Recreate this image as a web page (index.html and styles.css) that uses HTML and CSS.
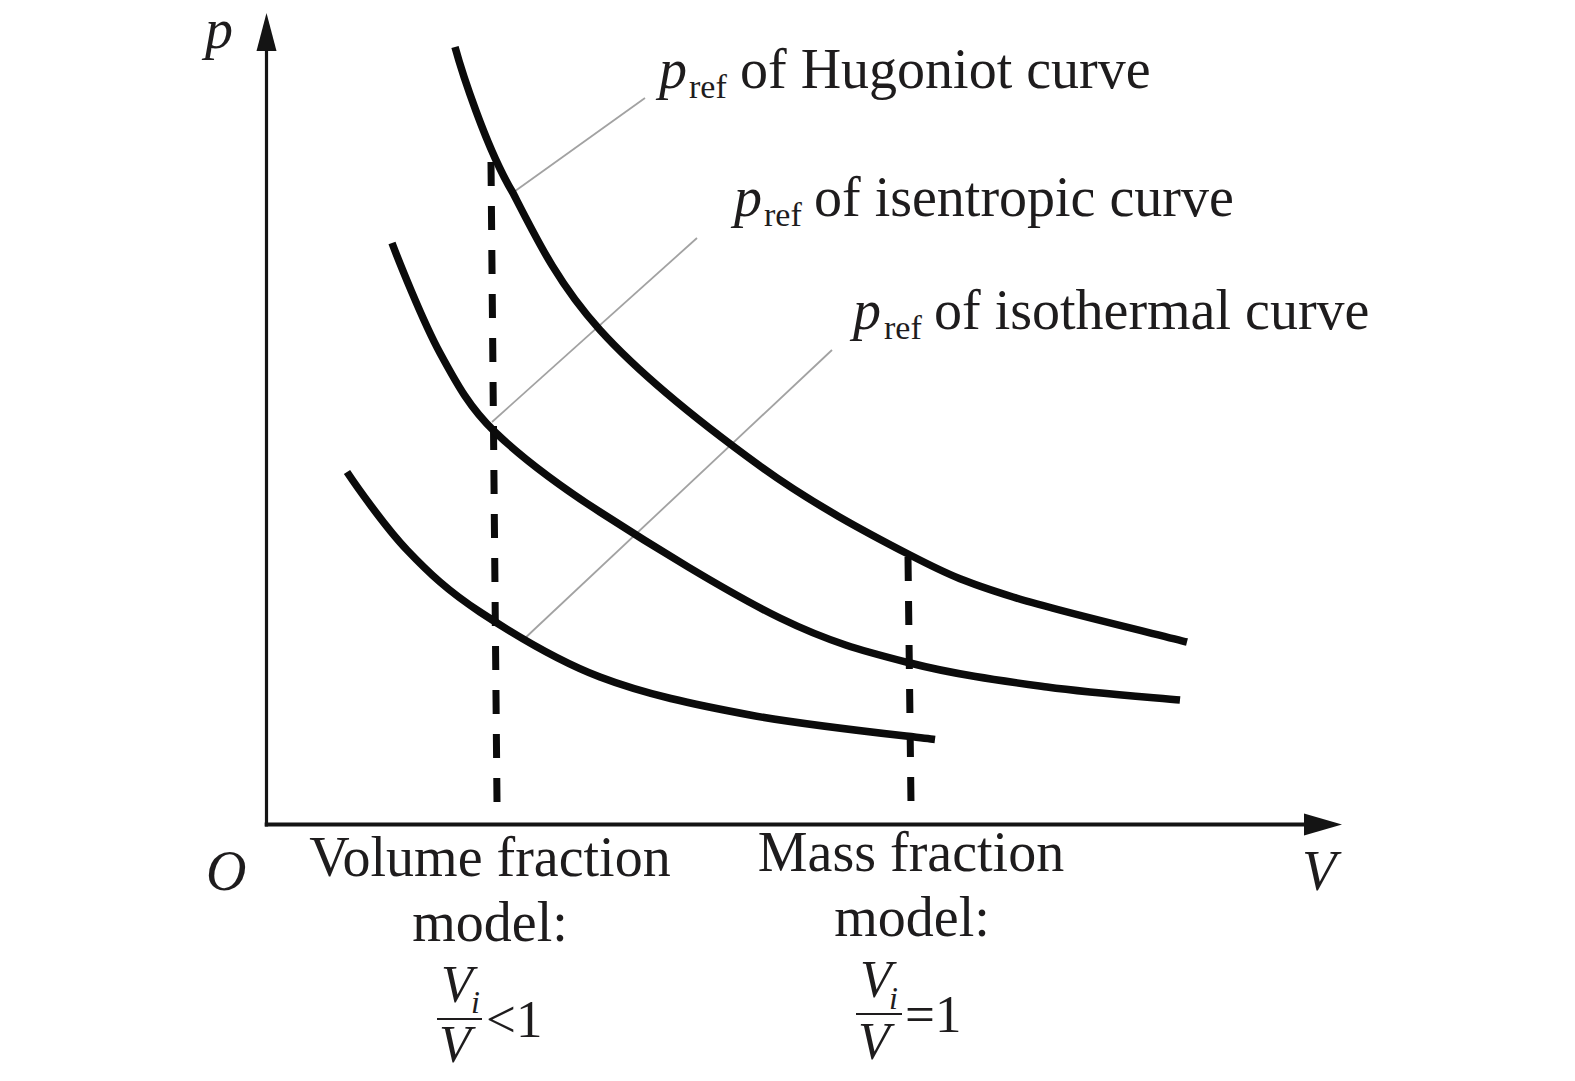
FILE: index.html
```html
<!DOCTYPE html>
<html lang="en">
<head>
<meta charset="utf-8">
<title>Reference pressure curves</title>
<link rel="stylesheet" href="styles.css">
</head>
<body>
<div class="figure">
<svg class="chart" width="1575" height="1081" viewBox="0 0 1575 1081" xmlns="http://www.w3.org/2000/svg">
  <!-- axes -->
  <line class="axis" x1="266.5" y1="826.5" x2="266.5" y2="46"/>
  <polygon class="arrow" points="256.5,51 266.5,13 276.5,51"/>
  <line class="axis axis-x" x1="264.7" y1="824.5" x2="1308" y2="824.5"/>
  <polygon class="arrow" points="1304,813.5 1342,824.5 1304,835.5"/>

  <!-- leader lines -->
  <line class="leader" x1="511" y1="194" x2="645" y2="98"/>
  <line class="leader" x1="492" y1="422" x2="697" y2="238"/>
  <line class="leader" x1="523" y1="640" x2="832" y2="350"/>

  <!-- dashed markers -->
  <line class="curve dash" x1="491" y1="162" x2="497" y2="802"/>
  <line class="curve dash" x1="908" y1="557" x2="911" y2="803"/>

  <!-- curves -->
  <path class="curve" d="M455,47 C461,69 486,148 513,193 C537.2,240.2 558.8,284.5 600,330 C641.2,375.5 708.3,428.5 760,466 C811.7,503.5 867.8,533.2 910,555 C952.2,576.8 966.8,582.5 1013,597 C1059.2,611.5 1158,634.5 1187,642"/>
  <path class="curve" d="M392,243 C398,259 422.8,321.3 440,353 C457.2,384.7 470,408 495,432 C521.7,457.5 552.5,481.2 600,512 C647.5,542.8 728.3,592.8 780,618 C831.7,643.2 865.5,651.5 910,663 C954.5,674.5 1002,680.8 1047,687 C1092,693.2 1157.8,697.8 1180,700"/>
  <path class="curve" d="M347,472 C355,484 384.8,526.7 407,550 C429.2,573.3 447.8,590.8 480,612 C512.2,633.2 555,659.8 600,677 C645,694.2 693.8,704.5 750,715 C806.2,725.5 905.8,735.8 935,739.5"/>

  <!-- axis labels -->
  <text class="txt it" x="205" y="48">p</text>
  <text class="txt it" x="206" y="890">O</text>
  <text class="txt it" x="1302" y="890">V</text>

  <!-- curve labels -->
  <text class="txt it" x="659" y="88">p</text>
  <text class="txt sub" x="689" y="98">ref</text>
  <text class="txt" x="740" y="88">of Hugoniot curve</text>

  <text class="txt it" x="734" y="216">p</text>
  <text class="txt sub" x="764" y="226">ref</text>
  <text class="txt" x="814" y="216">of isentropic curve</text>

  <text class="txt it" x="853" y="329">p</text>
  <text class="txt sub" x="884" y="339">ref</text>
  <text class="txt" x="934" y="329">of isothermal curve</text>

  <!-- volume fraction model -->
  <text class="txt mid" x="490" y="876">Volume fraction</text>
  <text class="txt mid" x="490" y="941">model:</text>
  <text class="txt it frac" x="441" y="1002">V</text>
  <text class="txt it idx" x="471" y="1013">i</text>
  <line class="bar" x1="437" y1="1019" x2="482" y2="1019"/>
  <text class="txt it frac" x="439" y="1062">V</text>
  <text class="txt rel" x="486" y="1037">&lt;1</text>

  <!-- mass fraction model -->
  <text class="txt mid" x="911" y="871">Mass fraction</text>
  <text class="txt mid" x="912" y="936">model:</text>
  <text class="txt it frac" x="860" y="997">V</text>
  <text class="txt it idx" x="889" y="1009">i</text>
  <line class="bar" x1="856" y1="1014" x2="902" y2="1014"/>
  <text class="txt it frac" x="858" y="1059">V</text>
  <text class="txt rel" x="905" y="1032">=1</text>
</svg>
</div>
</body>
</html>
```
FILE: styles.css
```css
html, body {
  margin: 0;
  padding: 0;
  background: #ffffff;
}

.figure {
  width: 1575px;
  height: 1081px;
  overflow: hidden;
  background: #ffffff;
}

.chart {
  display: block;
}

.axis {
  stroke: #141414;
  stroke-width: 3.2;
}

.axis-x {
  stroke-width: 4;
}

.arrow {
  fill: #141414;
}

.leader {
  stroke: #a2a2a2;
  stroke-width: 1.8;
}

.curve {
  fill: none;
  stroke: #0b0b0b;
  stroke-width: 7.5;
  stroke-linecap: butt;
  stroke-linejoin: round;
}

.dash {
  stroke-width: 7;
  stroke-dasharray: 24 20;
}

.bar {
  stroke: #1e1c1d;
  stroke-width: 2;
}

.txt {
  font-family: "Liberation Serif", "Times New Roman", serif;
  font-size: 56px;
  fill: #1e1c1d;
}

.it {
  font-style: italic;
}

.sub {
  font-size: 34px;
}

.mid {
  text-anchor: middle;
}

.frac {
  font-size: 52px;
}

.idx {
  font-size: 32px;
}

.rel {
  font-size: 53px;
}
```
